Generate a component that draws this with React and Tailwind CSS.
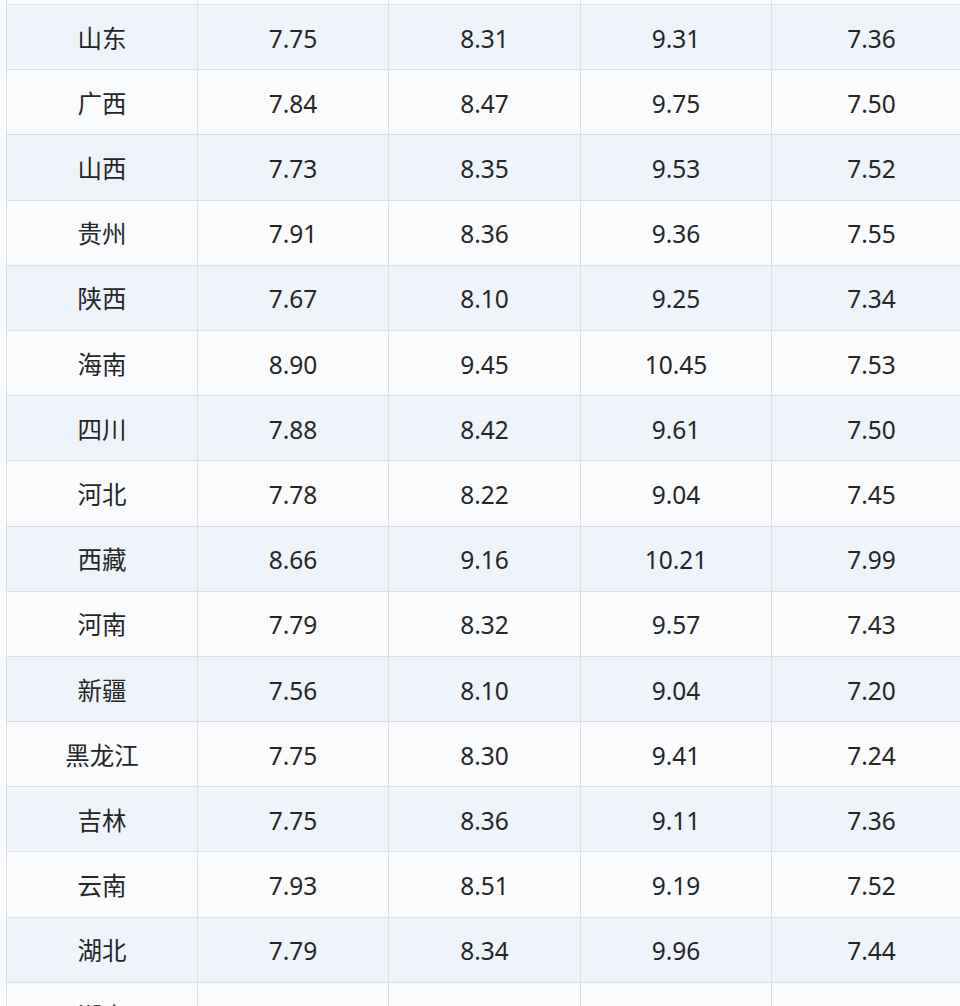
const rows = [
  ['山东', '7.75', '8.31', '9.31', '7.36'],
  ['广西', '7.84', '8.47', '9.75', '7.50'],
  ['山西', '7.73', '8.35', '9.53', '7.52'],
  ['贵州', '7.91', '8.36', '9.36', '7.55'],
  ['陕西', '7.67', '8.10', '9.25', '7.34'],
  ['海南', '8.90', '9.45', '10.45', '7.53'],
  ['四川', '7.88', '8.42', '9.61', '7.50'],
  ['河北', '7.78', '8.22', '9.04', '7.45'],
  ['西藏', '8.66', '9.16', '10.21', '7.99'],
  ['河南', '7.79', '8.32', '9.57', '7.43'],
  ['新疆', '7.56', '8.10', '9.04', '7.20'],
  ['黑龙江', '7.75', '8.30', '9.41', '7.24'],
  ['吉林', '7.75', '8.36', '9.11', '7.36'],
  ['云南', '7.93', '8.51', '9.19', '7.52'],
  ['湖北', '7.79', '8.34', '9.96', '7.44'],
  ['湖南', '7.80', '8.36', '9.46', '7.47'],
]

const grid = 'grid grid-cols-[191px_191px_192px_191px_200px]'

function Row({ cells, shaded }) {
  return (
    <div className={`${grid} h-[65.2px] border-t border-[#dcdfe4] ${shaded ? 'bg-[#eff4fb]' : 'bg-[#fafbfd]'}`}>
      {cells.map((c, i) => (
        <div key={i} className="flex items-center justify-center pt-[4px] border-r border-[#dcdfe4] text-[24.5px] text-[#262626]">
          {c}
        </div>
      ))}
    </div>
  )
}

export default function App() {
  return (
    <div
      className="w-[960px] h-[1006px] overflow-hidden bg-[#fafbfd]"
      style={{ fontFamily: '"Noto Sans", "Noto Sans CJK SC", sans-serif' }}
    >
      <div className="ml-[6px] border-l border-[#dcdfe4]">
        {/* tail of the row above */}
        <div className={`${grid} h-[4px] bg-[#fafbfd]`}>
          {[0, 1, 2, 3, 4].map(i => (
            <div key={i} className="border-r border-[#dcdfe4]" />
          ))}
        </div>
        {rows.map((r, idx) => (
          <Row key={idx} cells={r} shaded={idx % 2 === 0} />
        ))}
      </div>
    </div>
  )
}
